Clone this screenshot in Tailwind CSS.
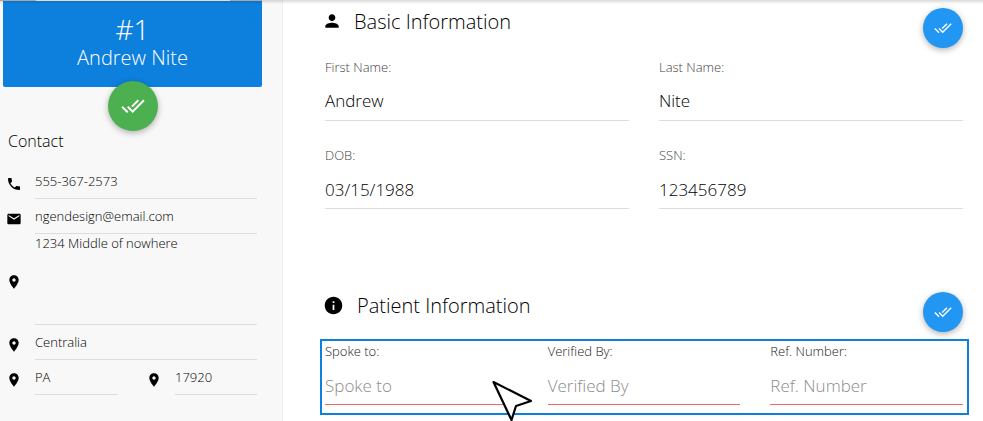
<!DOCTYPE html>
<html lang="en">
<head>
<meta charset="utf-8">
<title>Patient details</title>
<script src="https://cdn.jsdelivr.net/npm/@tailwindcss/browser@4"></script>
</head>
<body class="relative flex h-[421px] w-[983px] overflow-hidden bg-white font-['Open_Sans',sans-serif] font-light text-black">
<svg class="hidden">
  <symbol id="done" viewBox="0 0 24 24"><path d="M18 7l-1.41-1.41-6.34 6.34 1.41 1.41L18 7zm4.24-1.41L11.66 16.17 7.48 12l-1.41 1.41L11.66 19l12-12-1.42-1.41zM.41 13.41L6 19l1.41-1.41L1.83 12 .41 13.41z"/></symbol>
  <symbol id="pin" viewBox="0 0 24 24"><path d="M12 2C8.13 2 5 5.13 5 9c0 5.25 7 13 7 13s7-7.75 7-13c0-3.87-3.13-7-7-7zm0 9.5c-1.38 0-2.5-1.12-2.5-2.5s1.12-2.5 2.5-2.5 2.5 1.12 2.5 2.5-1.12 2.5-2.5 2.5z"/></symbol>
</svg>

<aside class="h-[421px] w-[283px] shrink-0 border-r border-[#eeeeee] bg-[#f8f8f8]">
  <div class="relative ml-[3px] flex h-[87px] w-[259px] flex-col items-center rounded-b-[2px] bg-[#0d7fdd] text-white">
    <div class="mt-[15px] text-[28px] leading-[28px]">#1</div>
    <div class="mt-[4px] text-[20px] leading-[22px]">Andrew Nite</div>
    <button class="absolute left-[105px] top-[81px] flex size-[50px] items-center justify-center rounded-full bg-[#4caf50] shadow-[0_2px_6px_rgba(0,0,0,0.3)]"><svg class="size-6 fill-white"><use href="#done"/></svg></button>
  </div>
  <h2 class="mt-[43px] pl-2 text-[16px] leading-[22px]">Contact</h2>

  <div class="mt-[12px] flex flex-col pl-[6px] text-[13px] leading-[18px]">
    <div class="flex h-[35px]">
      <svg class="mt-[12px] size-4" viewBox="0 0 24 24"><path d="M6.62 10.79c1.44 2.83 3.76 5.14 6.59 6.59l2.2-2.2c.27-.27.67-.36 1.02-.24 1.12.37 2.33.57 3.57.57.55 0 1 .45 1 1V20c0 .55-.45 1-1 1-9.39 0-17-7.61-17-17 0-.55.45-1 1-1h3.5c.55 0 1 .45 1 1 0 1.25.2 2.45.57 3.57.11.35.03.74-.25 1.02l-2.2 2.2z"/></svg>
      <div class="ml-[13px] w-[222px] border-b border-[#dddddd] pt-[8px]">555-367-2573</div>
    </div>
    <div class="flex h-[35px]">
      <svg class="mt-[12px] size-4" viewBox="0 0 24 24"><path d="M20 4H4c-1.1 0-1.99.9-1.99 2L2 18c0 1.1.9 2 2 2h16c1.1 0 2-.9 2-2V6c0-1.1-.9-2-2-2zm0 4l-8 5-8-5V6l8 5 8-5v2z"/></svg>
      <div class="ml-[13px] w-[222px] border-b border-[#dddddd] pt-[8px]">ngendesign@email.com</div>
    </div>
    <div class="flex h-[91px]">
      <svg class="mt-[40px] size-4"><use href="#pin"/></svg>
      <div class="ml-[13px] w-[222px] border-b border-[#dddddd]">1234 Middle of nowhere</div>
    </div>
    <div class="flex h-[35px]">
      <svg class="mt-[12px] size-4"><use href="#pin"/></svg>
      <div class="ml-[13px] w-[222px] border-b border-[#dddddd] pt-[8px]">Centralia</div>
    </div>
    <div class="flex h-[35px]">
      <svg class="mt-[12px] size-4"><use href="#pin"/></svg>
      <div class="ml-[13px] w-[83px] border-b border-[#dddddd] pt-[8px]">PA</div>
      <svg class="ml-[28px] mt-[12px] size-4"><use href="#pin"/></svg>
      <div class="ml-[13px] w-[82px] border-b border-[#dddddd] pt-[8px]">17920</div>
    </div>
  </div>
</aside>

<main class="w-[700px]">
  <section class="h-[292px] pl-[42px] pr-5 pt-2">
    <div class="flex h-10">
      <svg class="-ml-[3px] mt-[3px] size-5" viewBox="0 0 24 24"><path d="M12 12c2.21 0 4-1.79 4-4s-1.79-4-4-4-4 1.79-4 4 1.79 4 4 4zm0 2c-2.67 0-8 1.34-8 4v2h16v-2c0-2.66-5.33-4-8-4z"/></svg>
      <h2 class="ml-[12px] text-[20px] leading-[28px]">Basic Information</h2>
      <button class="ml-auto flex size-10 items-center justify-center rounded-full bg-[#2196f3] shadow-[0_2px_6px_rgba(0,0,0,0.3)]"><svg class="size-[18px] fill-white"><use href="#done"/></svg></button>
    </div>
    <div class="mt-[9px] grid grid-cols-2 gap-x-[30px]">
      <div class="h-[88px]"><div class="text-[13px] leading-[20px] text-[#444444]">First Name:</div><div class="h-[44px] border-b border-[#dddddd] pt-[12px] text-[17px] leading-[24px]">Andrew</div></div>
      <div class="h-[88px]"><div class="text-[13px] leading-[20px] text-[#444444]">Last Name:</div><div class="h-[44px] border-b border-[#dddddd] pt-[12px] text-[17px] leading-[24px]">Nite</div></div>
      <div class="h-[88px]"><div class="text-[13px] leading-[20px] text-[#444444]">DOB:</div><div class="h-[44px] border-b border-[#dddddd] pt-[13px] text-[17px] leading-[24px]">03/15/1988</div></div>
      <div class="h-[88px]"><div class="text-[13px] leading-[20px] text-[#444444]">SSN:</div><div class="h-[44px] border-b border-[#dddddd] pt-[13px] text-[17px] leading-[24px]">123456789</div></div>
    </div>
  </section>

  <section class="pl-[37px]">
    <div class="flex h-[47px] pr-5">
      <svg class="ml-[3px] mt-[3px] size-[21px]" viewBox="0 0 24 24"><path d="M12 2C6.48 2 2 6.48 2 12s4.480 10 10 10 10-4.480 10-10S17.520 2 12 2zm1 15h-2v-6h2v6zm0-8h-2V7h2v2z"/></svg>
      <h2 class="ml-[13px] text-[20px] leading-[28px]">Patient Information</h2>
      <button class="ml-auto flex size-10 items-center justify-center rounded-full bg-[#2196f3] shadow-[0_2px_6px_rgba(0,0,0,0.3)]"><svg class="size-[18px] fill-white"><use href="#done"/></svg></button>
    </div>
    <div class="grid h-[76px] w-[649px] grid-cols-3 gap-x-[30px] border-2 border-[#0d7fdd] bg-white pl-[3px] pr-1">
      <div><div class="h-[21px] text-[13px] leading-[20px] text-[#222222]">Spoke to:</div><div class="h-[43px] border-b border-[#ef6b62] pt-[12px] text-[17px] leading-[24px] text-[#8c8c8c]">Spoke to</div></div>
      <div><div class="h-[21px] text-[13px] leading-[20px] text-[#222222]">Verified By:</div><div class="h-[43px] border-b border-[#ef6b62] pt-[12px] text-[17px] leading-[24px] text-[#8c8c8c]">Verified By</div></div>
      <div><div class="h-[21px] text-[13px] leading-[20px] text-[#222222]">Ref. Number:</div><div class="h-[43px] border-b border-[#ef6b62] pt-[12px] text-[17px] leading-[24px] text-[#8c8c8c]">Ref. Number</div></div>
    </div>
  </section>
</main>

<div class="absolute inset-x-0 top-0 h-[4px] bg-gradient-to-b from-black/15 to-transparent"></div>
<div class="absolute left-0 top-0 flex h-px w-[262px]"><div class="w-9 bg-[#a8a8a8]"></div><div class="w-[194px] bg-[#dedede]"></div><div class="grow bg-[#a8a8a8]"></div></div>
<svg class="absolute left-[490px] top-[378px] h-[43px] w-[44px]" viewBox="0 0 44 43"><path d="M3.5 4L41 23L26 28L21.5 42Z" fill="#fff" stroke="#000" stroke-width="2.2" stroke-linejoin="round"/></svg>
</body>
</html>
